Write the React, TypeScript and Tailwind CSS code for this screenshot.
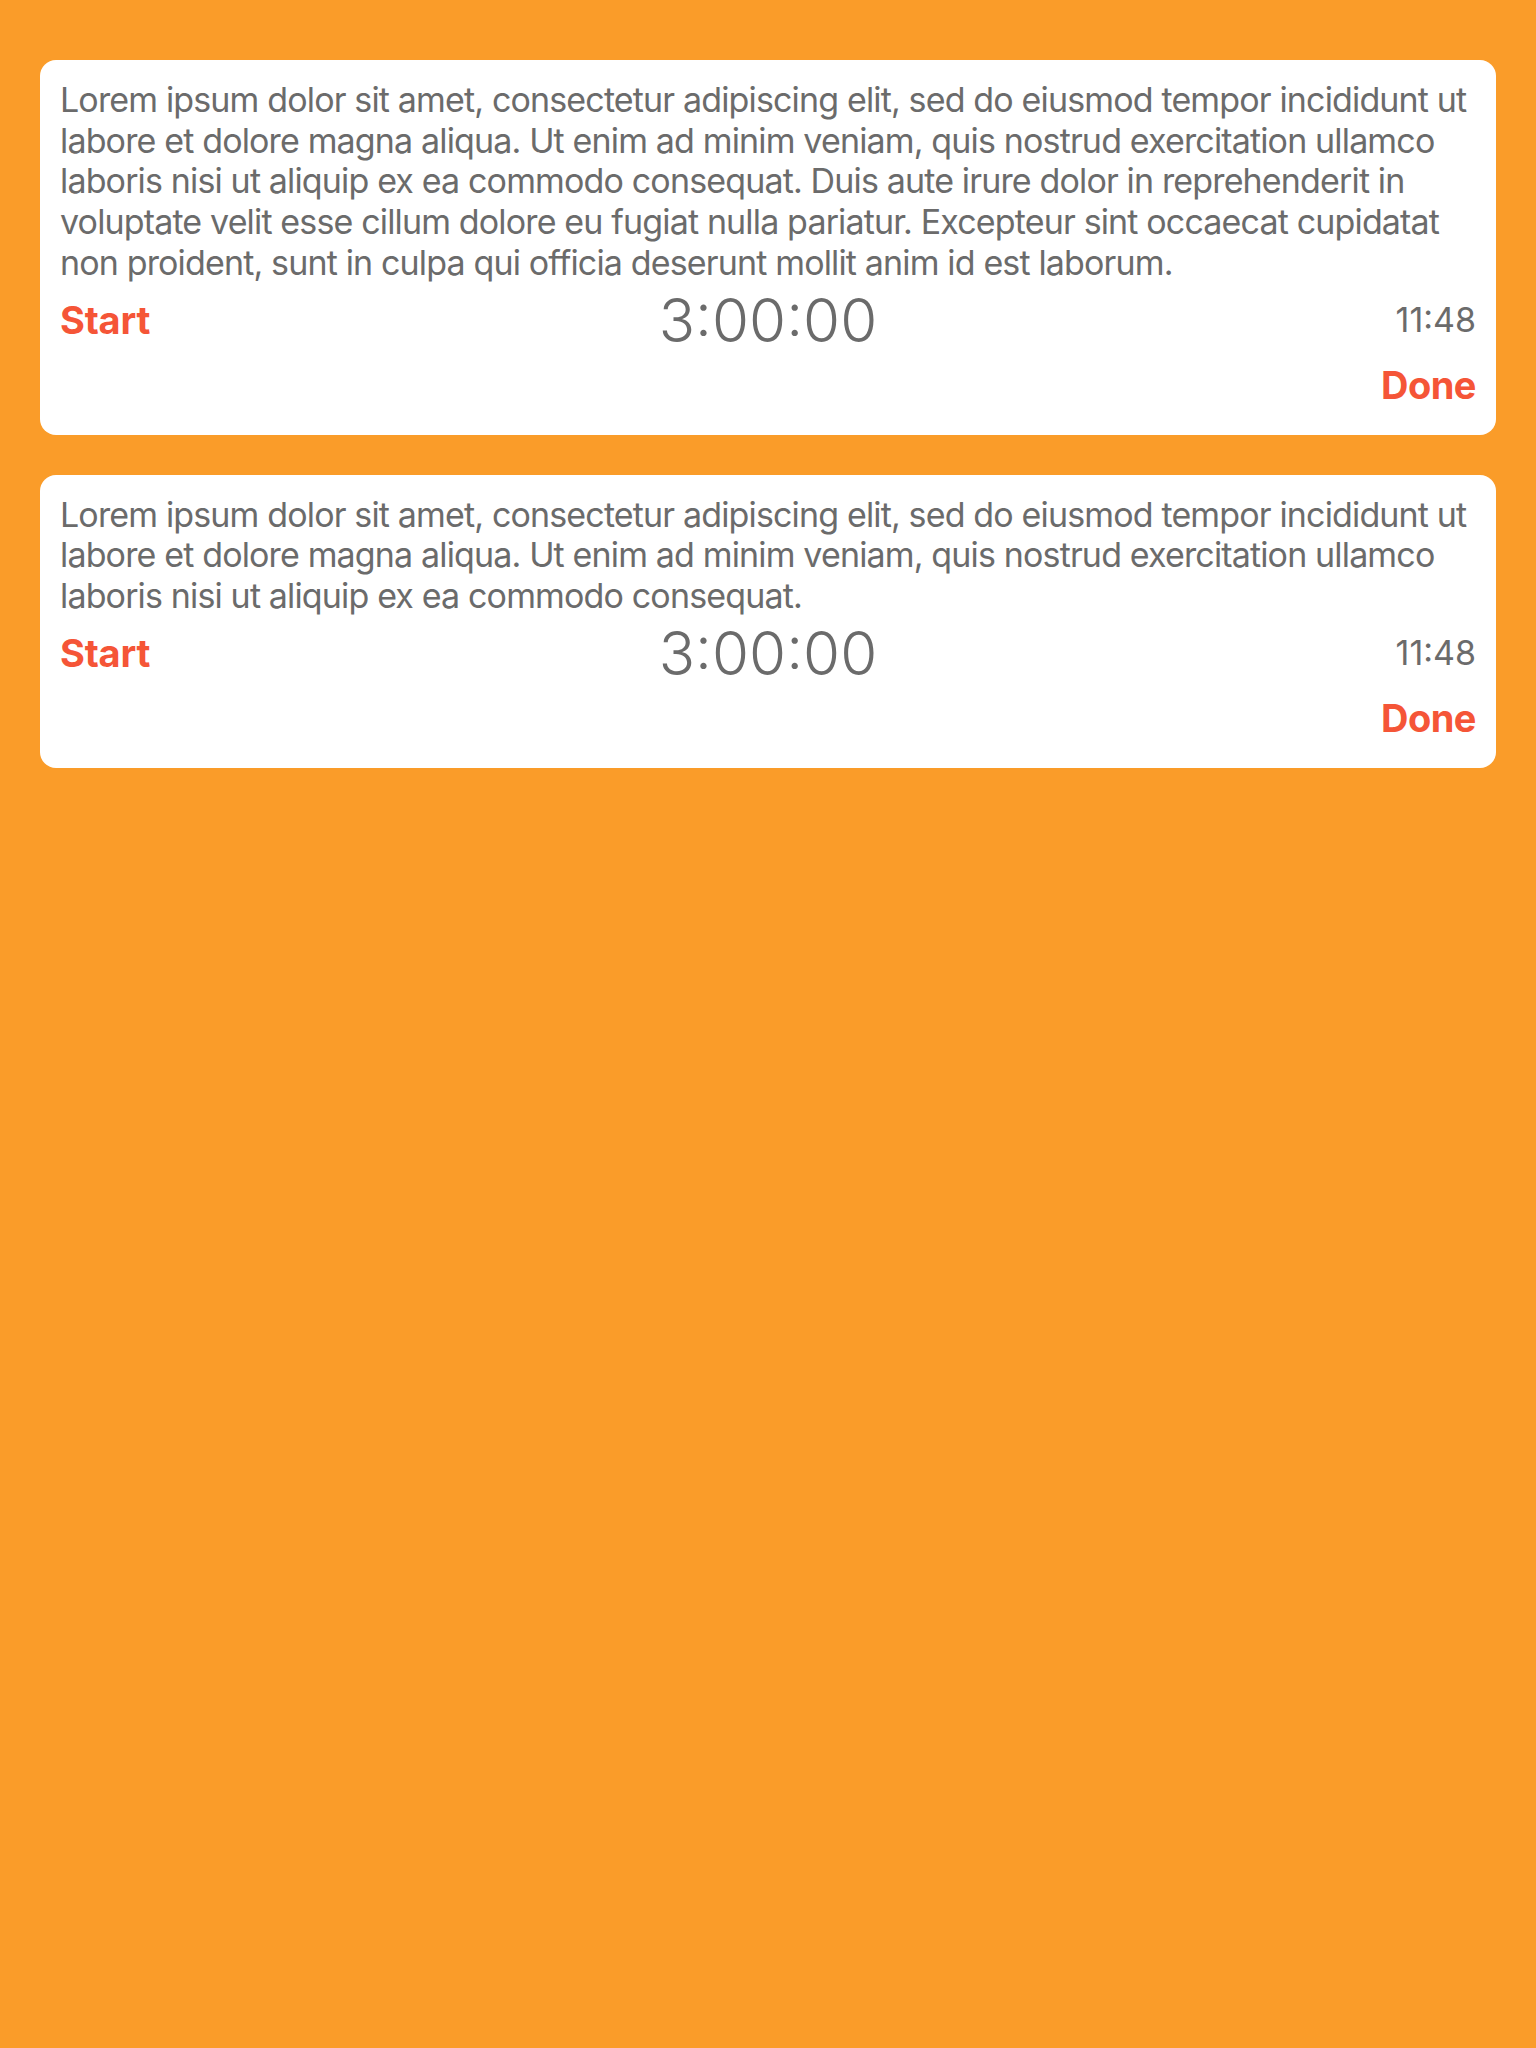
import React from 'react';

interface Task {
  id: number;
  text: string;
  timer: string;
  time: string;
}

const LONG =
  'Lorem ipsum dolor sit amet, consectetur adipiscing elit, sed do eiusmod tempor incididunt ut labore et dolore magna aliqua. Ut enim ad minim veniam, quis nostrud exercitation ullamco laboris nisi ut aliquip ex ea commodo consequat. Duis aute irure dolor in reprehenderit in voluptate velit esse cillum dolore eu fugiat nulla pariatur. Excepteur sint occaecat cupidatat non proident, sunt in culpa qui officia deserunt mollit anim id est laborum.';

const SHORT =
  'Lorem ipsum dolor sit amet, consectetur adipiscing elit, sed do eiusmod tempor incididunt ut labore et dolore magna aliqua. Ut enim ad minim veniam, quis nostrud exercitation ullamco laboris nisi ut aliquip ex ea commodo consequat.';

const tasks: Task[] = [
  { id: 1, text: LONG, timer: '3:00:00', time: '11:48' },
  { id: 2, text: SHORT, timer: '3:00:00', time: '11:48' },
];

function TaskCard({ task }: { task: Task }) {
  return (
    <div className="bg-white rounded-[16px] px-5 pt-5 pb-[27px]">
      <p className="text-[34px] leading-[40.7px] text-[#6b6b6b] tracking-[-0.85px]">{task.text}</p>

      {/* Start / timer / time row */}
      <div className="relative flex items-center justify-between h-[72px]">
        <button className="text-[38px] font-bold text-[#f55537] leading-none tracking-[-0.2px]">Start</button>
        <div className="absolute left-1/2 -translate-x-1/2 text-[60px] font-light text-[#6b6b6b] leading-none">
          {task.timer}
        </div>
        <span className="text-[34px] text-[#6b6b6b] leading-none">{task.time}</span>
      </div>

      <div className="flex justify-end mt-[6px]">
        <button className="text-[38px] font-bold text-[#f55537] leading-[46px] tracking-[-0.5px]">Done</button>
      </div>
    </div>
  );
}

export default function App() {
  return (
    <div
      className="min-h-[2048px] bg-[#fa9c29] px-10 pt-[60px] flex flex-col gap-10"
      style={{ fontFamily: 'Inter, "Noto Sans", sans-serif' }}
    >
      {tasks.map((task) => (
        <TaskCard key={task.id} task={task} />
      ))}
    </div>
  );
}
